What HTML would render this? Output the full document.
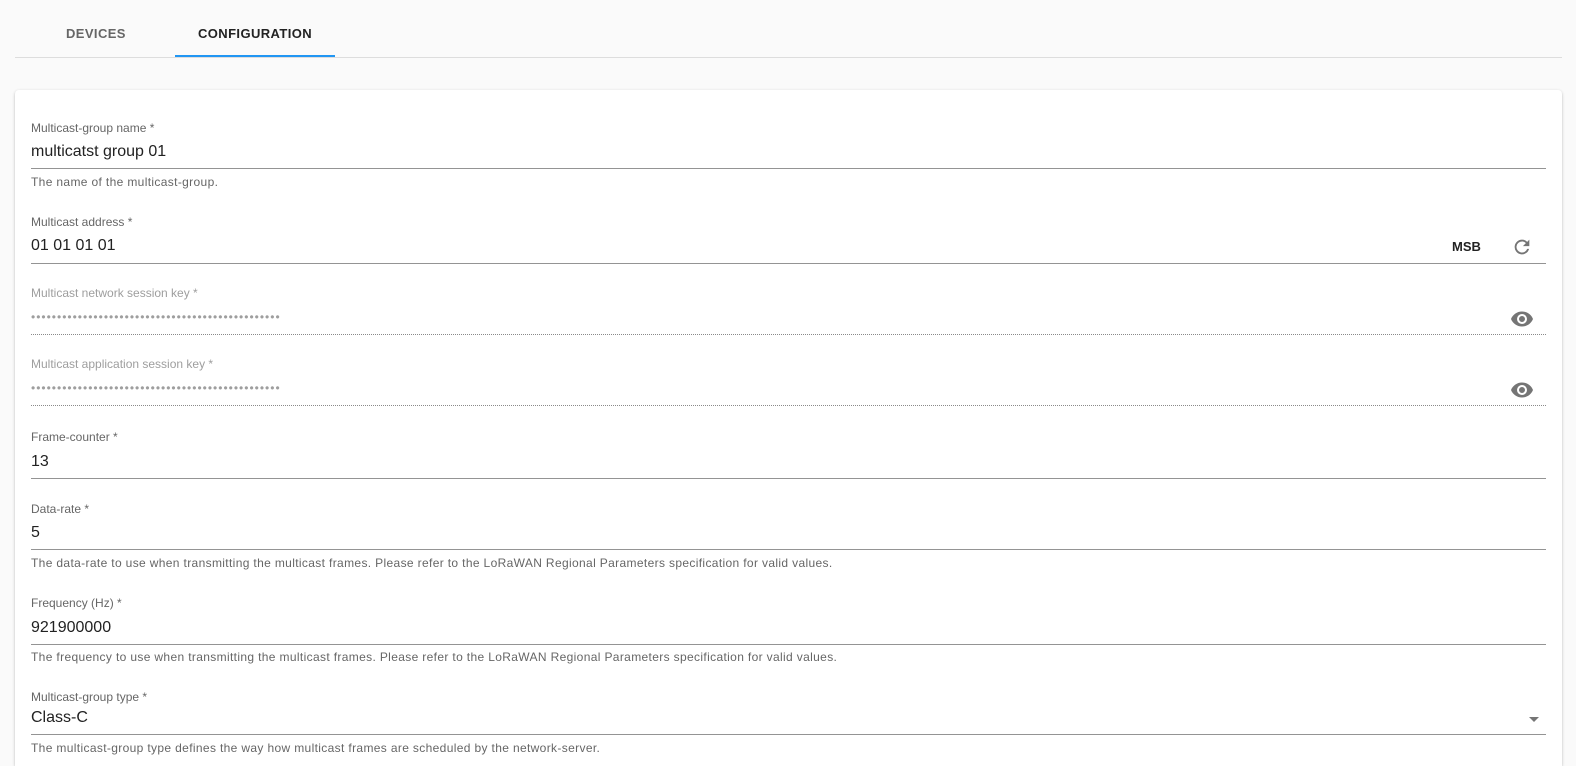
<!DOCTYPE html>
<html style="overflow:hidden"><head><meta charset="utf-8"><style>
*{box-sizing:border-box;margin:0;padding:0}
html,body{width:1576px;height:766px;overflow:hidden}
body{background:#fafafa;font-family:"Liberation Sans",sans-serif;position:relative}
.a{position:absolute;white-space:nowrap}
.tab{font-size:13px;font-weight:bold;letter-spacing:.4px;top:26px}
.card{position:absolute;left:15px;top:90px;width:1547px;height:676px;background:#fff;border-radius:4px 4px 0 0;box-shadow:0 1px 3px rgba(0,0,0,.2),0 1px 1px rgba(0,0,0,.14)}
.lb{font-size:12px;color:#666;left:31px}
.lb.d{color:#9e9e9e}
.v{font-size:16px;color:#222;left:31px}
.h{font-size:12px;color:#666;left:31px;letter-spacing:.35px}
.ln{position:absolute;left:31px;width:1515px;height:0;border-top:1px solid #949494}
.ln.dt{border-top:1px dotted #8a8a8a}
.dots{font-size:12px;color:#9e9e9e;left:31px;letter-spacing:1px}
</style></head><body>
<div class="a tab" style="left:66px;color:#666">DEVICES</div>
<div class="a tab" style="left:198px;color:#222">CONFIGURATION</div>
<div class="a" style="left:15px;top:57px;width:1547px;height:1px;background:#ddd"></div>
<div class="a" style="left:175px;top:55px;width:160px;height:2px;background:#2196f3"></div>
<div class="card"></div>

<div class="a lb" style="top:121px">Multicast-group name *</div>
<div class="a v" style="top:143px">multicatst group 01</div>
<div class="ln" style="top:168px"></div>
<div class="a h" style="top:175px">The name of the multicast-group.</div>

<div class="a lb" style="top:215px">Multicast address *</div>
<div class="a v" style="top:237px">01 01 01 01</div>
<div class="a" style="left:1452px;top:239px;font-size:13px;font-weight:bold;color:#222">MSB</div>
<svg class="a" style="left:1511px;top:236px" width="22" height="22" viewBox="0 0 24 24"><path fill="#757575" d="M17.65 6.35A7.96 7.96 0 0 0 12 4a8 8 0 1 0 7.73 10h-2.08A6 6 0 1 1 12 6c1.66 0 3.140.69 4.22 1.78L13 11h7V4l-2.35 2.350z"/></svg>
<div class="ln" style="top:263px"></div>

<div class="a lb d" style="top:286px">Multicast network session key *</div>
<div class="a dots" style="top:310px">••••••••••••••••••••••••••••••••••••••••••••••••</div>
<svg class="a" style="left:1510px;top:307px" width="24" height="24" viewBox="0 0 24 24"><path fill="#757575" d="M12 4.5C7 4.5 2.73 7.61 1 12c1.73 4.39 6 7.5 11 7.5s9.27-3.11 11-7.5c-1.730-4.390-6-7.500-11-7.500zM12 17a5 5 0 1 1 0-10 5 5 0 0 1 0 10zm0-8a3 3 0 1 0 0 6 3 3 0 0 0 0-6z"/></svg>
<div class="ln dt" style="top:334px"></div>

<div class="a lb d" style="top:357px">Multicast application session key *</div>
<div class="a dots" style="top:381px">••••••••••••••••••••••••••••••••••••••••••••••••</div>
<svg class="a" style="left:1510px;top:378px" width="24" height="24" viewBox="0 0 24 24"><path fill="#757575" d="M12 4.5C7 4.5 2.73 7.61 1 12c1.73 4.39 6 7.5 11 7.5s9.27-3.11 11-7.5c-1.730-4.390-6-7.500-11-7.500zM12 17a5 5 0 1 1 0-10 5 5 0 0 1 0 10zm0-8a3 3 0 1 0 0 6 3 3 0 0 0 0-6z"/></svg>
<div class="ln dt" style="top:405px"></div>

<div class="a lb" style="top:430px">Frame-counter *</div>
<div class="a v" style="top:453px">13</div>
<div class="ln" style="top:478px"></div>

<div class="a lb" style="top:502px">Data-rate *</div>
<div class="a v" style="top:524px">5</div>
<div class="ln" style="top:549px"></div>
<div class="a h" style="top:556px">The data-rate to use when transmitting the multicast frames. Please refer to the LoRaWAN Regional Parameters specification for valid values.</div>

<div class="a lb" style="top:596px">Frequency (Hz) *</div>
<div class="a v" style="top:619px">921900000</div>
<div class="ln" style="top:644px"></div>
<div class="a h" style="top:650px">The frequency to use when transmitting the multicast frames. Please refer to the LoRaWAN Regional Parameters specification for valid values.</div>

<div class="a lb" style="top:690px">Multicast-group type *</div>
<div class="a v" style="top:709px">Class-C</div>
<div class="a" style="left:1529px;top:717px;width:0;height:0;border-left:5px solid transparent;border-right:5px solid transparent;border-top:5px solid #757575"></div>
<div class="ln" style="top:734px"></div>
<div class="a h" style="top:741px">The multicast-group type defines the way how multicast frames are scheduled by the network-server.</div>
</body></html>
